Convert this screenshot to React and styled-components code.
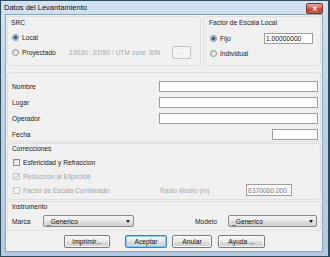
import React from 'react';
import styled, { createGlobalStyle } from 'styled-components';

const GlobalStyle = createGlobalStyle`
  html, body {
    margin: 0;
    padding: 0;
    background: #ffffff;
  }
  body {
    font-family: "Liberation Sans", Arial, sans-serif;
    font-size: 6.7px;
    color: #1b1b1b;
  }
  * {
    box-sizing: border-box;
  }
`;

const Window = styled.div`
  width: 330px;
  height: 257px;
  border: 1px solid #2f4b59;
  border-right-width: 2px;
  background: linear-gradient(180deg, #d3e2f2 0%, #bfd4ea 35%, #b3cae2 100%);
  padding: 0 5px 4px 4px;
  display: flex;
  flex-direction: column;
`;

const TitleBar = styled.div`
  height: 13px;
  display: flex;
  align-items: center;
  justify-content: space-between;
`;

const Title = styled.span`
  font-size: 7.5px;
  color: #101010;
  margin-left: -1px;
`;

const CloseButton = styled.div`
  width: 17px;
  height: 11px;
  margin-top: 1px;
  border: 1px solid #7a2c2c;
  border-radius: 2px;
  background: linear-gradient(180deg, #e8a493 0%, #d36a5a 45%, #c2402f 55%, #d06048 100%);
  color: #ffffff;
  font-size: 7px;
  font-weight: bold;
  display: flex;
  align-items: center;
  justify-content: center;
  line-height: 1;
`;

const Client = styled.div`
  flex: 1;
  background: #f0f0f0;
  border: 1px solid #8ea6b8;
  padding: 1px 1px 3px 1px;
  display: flex;
  flex-direction: column;
`;

const TopRow = styled.div`
  display: flex;
  gap: 2px;
  height: 50px;
`;

const Group = styled.div`
  width: ${p => p.$w ? `${p.$w}px` : '100%'};
  height: ${p => p.$h}px;
  margin-top: ${p => p.$mt || 0}px;
  border: 1px solid #e0e0e0;
  border-radius: 3px;
  padding: ${p => p.$pad};
  display: flex;
  flex-direction: column;
`;

const Legend = styled.div`
  height: 10px;
  line-height: 10px;
  color: #1b1b1b;
`;

const OptionRow = styled.div`
  display: flex;
  align-items: center;
  height: ${p => p.$h || 12}px;
  margin-top: ${p => p.$mt || 0}px;
  padding-left: 1px;
`;

const Radio = styled.span`
  width: 7px;
  height: 7px;
  border-radius: 50%;
  flex: none;
  border: 1px solid #8d8d8d;
  background: ${p => p.$checked
    ? 'radial-gradient(circle, #24507f 0, #3a6ea3 1.4px, #a7c1da 2.2px, #f4f4f4 2.8px)'
    : 'linear-gradient(135deg, #d6d6d6, #fbfbfb)'};
`;

const OptionLabel = styled.span`
  margin-left: 3px;
  color: ${p => p.$disabled ? '#a3a3a3' : '#1b1b1b'};
  width: ${p => p.$w ? `${p.$w}px` : 'auto'};
  white-space: nowrap;
`;

const Hint = styled.span`
  color: #a8a8a8;
  white-space: nowrap;
  width: ${p => p.$w}px;
`;

const SmallButton = styled.div`
  width: 19px;
  height: 13px;
  border: 1px solid #c2c2c2;
  border-radius: 2px;
  background: #f4f4f4;
  color: #a8a8a8;
  font-size: 6px;
  display: flex;
  align-items: flex-end;
  justify-content: center;
  padding-bottom: 3px;
`;

const TextBox = styled.input`
  width: ${p => p.$w}px;
  height: ${p => p.$h || 11}px;
  border: 1px solid #9e9e9e;
  background: ${p => p.disabled ? '#fafafa' : '#ffffff'};
  color: ${p => p.disabled ? '#7a7a7a' : '#111111'};
  font: inherit;
  padding: 0 1px;
  outline: none;
  flex: none;
`;

const FieldRow = styled.div`
  display: flex;
  align-items: center;
  justify-content: space-between;
  height: 11px;
  margin-top: ${p => p.$mt}px;
`;

const FieldLabel = styled.span`
  color: #1b1b1b;
`;

const Check = styled.span`
  width: 7px;
  height: 7px;
  flex: none;
  border: 1px solid ${p => p.$disabled ? '#c3c3c3' : '#8c8c8c'};
  background: ${p => p.$disabled ? '#f6f6f6' : 'linear-gradient(135deg, #d9d9d9, #fbfbfb)'};
  display: flex;
  align-items: center;
  justify-content: center;
`;

const ComboRow = styled.div`
  display: flex;
  align-items: center;
  height: 12px;
  margin-top: 3px;
`;

const ComboLabel = styled.span`
  width: ${p => p.$w}px;
  margin-left: ${p => p.$ml || 0}px;
  color: #1b1b1b;
`;

const Combo = styled.div`
  width: ${p => p.$w}px;
  height: 12px;
  border: 1px solid #8a8a8a;
  border-radius: 2px;
  background: linear-gradient(180deg, #f5f5f5 0%, #ececec 48%, #dedede 52%, #d4d4d4 100%);
  display: flex;
  align-items: center;
  justify-content: space-between;
  padding: 0 3px 0 3px;
  color: #111;
`;

const Arrow = styled.span`
  width: 0;
  height: 0;
  border-left: 2.5px solid transparent;
  border-right: 2.5px solid transparent;
  border-top: 3px solid #202020;
`;

const ButtonRow = styled.div`
  display: flex;
  margin-top: 4px;
  height: 13px;
  padding-left: 57px;
`;

const Button = styled.button`
  width: ${p => p.$w}px;
  height: 13px;
  margin-left: ${p => p.$ml || 0}px;
  padding: 0;
  font: inherit;
  color: #111;
  border: 1px solid ${p => p.$default ? '#3c7fb1' : '#7a7a7a'};
  border-radius: 2px;
  background: linear-gradient(180deg, #f3f3f3 0%, #ebebeb 48%, #dddddd 52%, #cfcfcf 100%);
  box-shadow: inset 0 0 0 1px ${p => p.$default ? 'rgba(110, 205, 245, 0.8)' : 'rgba(255, 255, 255, 0.8)'};
`;

function CheckMark() {
  return (
    <svg width="5" height="5" viewBox="0 0 5 5">
      <polyline points="0.6,2.6 1.9,3.9 4.4,0.9" fill="none" stroke="#a0a0a0" strokeWidth="0.9" />
    </svg>
  );
}

export default function App() {
  return (
    <>
      <GlobalStyle />
      <Window>
        <TitleBar>
          <Title>Datos del Levantamiento</Title>
          <CloseButton>✕</CloseButton>
        </TitleBar>
        <Client>
          <TopRow>
            <Group $w={194} $h={50} $pad="1px 4px 0 3px">
              <Legend>SRC</Legend>
              <OptionRow $mt={3}>
                <Radio $checked />
                <OptionLabel>Local</OptionLabel>
              </OptionRow>
              <OptionRow $h={14} $mt={2}>
                <Radio />
                <OptionLabel $w={47}>Proyectado</OptionLabel>
                <Hint $w={103}>23030 : ED50 / UTM zone 30N</Hint>
                <SmallButton>...</SmallButton>
              </OptionRow>
            </Group>
            <Group $w={118} $h={50} $pad="1px 7px 0 5px">
              <Legend>Factor de Escala Local</Legend>
              <OptionRow $mt={4}>
                <Radio $checked />
                <OptionLabel $w={45}>Fijo</OptionLabel>
                <TextBox $w={49} readOnly defaultValue="1.00000000" />
              </OptionRow>
              <OptionRow $h={14} $mt={2}>
                <Radio />
                <OptionLabel>Individual</OptionLabel>
              </OptionRow>
            </Group>
          </TopRow>

          <Group $h={70} $mt={6} $pad="0 2px 0 4px">
            <FieldRow $mt={8}>
              <FieldLabel>Nombre</FieldLabel>
              <TextBox $w={159} readOnly defaultValue="" />
            </FieldRow>
            <FieldRow $mt={5}>
              <FieldLabel>Lugar</FieldLabel>
              <TextBox $w={159} readOnly defaultValue="" />
            </FieldRow>
            <FieldRow $mt={5}>
              <FieldLabel>Operador</FieldLabel>
              <TextBox $w={159} readOnly defaultValue="" />
            </FieldRow>
            <FieldRow $mt={5}>
              <FieldLabel>Fecha</FieldLabel>
              <TextBox $w={46} readOnly defaultValue="" />
            </FieldRow>
          </Group>

          <Group $h={57} $mt={1} $pad="0 2px 0 4px">
            <Legend>Correcciones</Legend>
            <OptionRow $mt={2}>
              <Check />
              <OptionLabel>Esfericidad y Refraccion</OptionLabel>
            </OptionRow>
            <OptionRow $mt={2}>
              <Check $disabled><CheckMark /></Check>
              <OptionLabel $disabled>Reduccion al Elipsoide</OptionLabel>
            </OptionRow>
            <OptionRow $mt={2}>
              <Check $disabled />
              <OptionLabel $disabled $w={137}>Factor de Escala Combinado</OptionLabel>
              <Hint $w={86}>Radio Medio (m)</Hint>
              <TextBox $w={46} $h={12} disabled defaultValue="6370000.000" />
            </OptionRow>
          </Group>

          <Group $h={30} $mt={1} $pad="0 2px 0 4px">
            <Legend>Instrumento</Legend>
            <ComboRow>
              <ComboLabel $w={31}>Marca</ComboLabel>
              <Combo $w={91}>
                <span>_Generico</span>
                <Arrow />
              </Combo>
              <ComboLabel $w={33} $ml={61}>Modelo</ComboLabel>
              <Combo $w={89}>
                <span>_Generico</span>
                <Arrow />
              </Combo>
            </ComboRow>
          </Group>

          <ButtonRow>
            <Button $w={46}>Imprimir...</Button>
            <Button $w={42} $ml={15} $default>Aceptar</Button>
            <Button $w={40} $ml={5}>Anular</Button>
            <Button $w={47} $ml={6}>Ayuda ...</Button>
          </ButtonRow>
        </Client>
      </Window>
    </>
  );
}
